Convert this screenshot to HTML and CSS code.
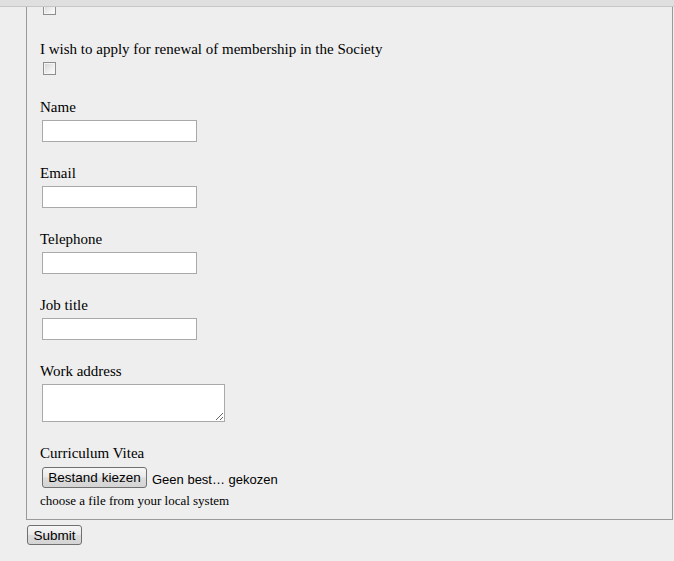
FILE: index.html
```html
<!DOCTYPE html>
<html>
<head>
<meta charset="utf-8">
<link rel="stylesheet" href="styles.css">
</head>
<body>
<div class="topbar"></div>
<form class="page">
  <fieldset class="box">
    <input type="checkbox" class="check first">
    <div class="field renew">
      <label class="lbl">I wish to apply for renewal of membership in the Society</label>
      <input type="checkbox" class="check">
    </div>
    <div class="field name">
      <label class="lbl">Name</label>
      <input type="text" class="txt">
    </div>
    <div class="field">
      <label class="lbl">Email</label>
      <input type="text" class="txt">
    </div>
    <div class="field">
      <label class="lbl">Telephone</label>
      <input type="text" class="txt">
    </div>
    <div class="field">
      <label class="lbl">Job title</label>
      <input type="text" class="txt">
    </div>
    <div class="field">
      <label class="lbl">Work address</label>
      <textarea class="area"></textarea>
    </div>
    <div class="field cv">
      <label class="lbl">Curriculum Vitea</label>
      <div class="file">
        <span class="btn">Bestand kiezen</span>
        <span class="none">Geen best… gekozen</span>
      </div>
      <div class="help">choose a file from your local system</div>
    </div>
  </fieldset>
  <button type="button" class="btn submit">Submit</button>
</form>
</body>
</html>
```
FILE: styles.css
```css
html, body {
  margin: 0;
  padding: 0;
  background: #eeeeee;
}
body {
  font-family: "Liberation Serif", "Times New Roman", serif;
  font-size: 15px;
  color: #000;
}
.topbar {
  position: fixed;
  top: 0;
  left: 0;
  right: 0;
  height: 6px;
  background: #dfdfdf;
  border-bottom: 1px solid #c6c6c6;
  z-index: 5;
}
.page {
  padding: 0 1px 0 26px;
  margin: 0;
}
.box {
  margin: 0;
  border: 1px solid #9a9a9a;
  border-top: none;
  padding: 2px 13px 11px 13px;
  min-width: 0;
}
.check {
  appearance: none;
  -webkit-appearance: none;
  display: block;
  width: 13px;
  height: 13px;
  margin: 0 0 0 3px;
  border: 1px solid #8e8e8e;
  background: linear-gradient(135deg, #d2d2d2 0%, #ebebeb 50%, #ffffff 100%);
  box-shadow: inset 0 0 0 1px #f4f4f4;
  box-sizing: border-box;
}
.field {
  display: flex;
  flex-direction: column;
  align-items: flex-start;
  margin-top: 22px;
}
.renew {
  margin-top: 25px;
}
.name {
  margin-top: 23px;
}
.lbl {
  display: block;
  line-height: 18px;
  height: 18px;
  white-space: nowrap;
}
.renew .check {
  margin-top: 4px;
}
.txt {
  box-sizing: border-box;
  width: 155px;
  height: 22px;
  margin: 4px 0 0 2px;
  border: 1px solid #a9a9a9;
  background: #fff;
  padding: 0 3px;
  outline: none;
}
.area {
  box-sizing: border-box;
  width: 183px;
  height: 38px;
  margin: 4px 0 0 2px;
  border: 1px solid #a9a9a9;
  background: #fff;
  padding: 2px;
  resize: both;
  outline: none;
}
.file {
  display: flex;
  align-items: center;
  margin: 5px 0 0 2px;
  font-family: "Liberation Sans", Arial, sans-serif;
  font-size: 13px;
}
.btn {
  box-sizing: border-box;
  display: inline-flex;
  align-items: center;
  justify-content: center;
  white-space: nowrap;
  font-family: "Liberation Sans", Arial, sans-serif;
  font-size: 13.5px;
  color: #000;
  border: 1px solid #707070;
  border-radius: 3px;
  background: linear-gradient(#f6f6f6 0%, #e9e9e9 48%, #dcdcdc 52%, #d4d4d4 100%);
  padding: 0;
}
.file .btn {
  width: 105px;
  height: 21px;
}
.none {
  margin-left: 5px;
  padding-top: 3px;
}
.help {
  font-size: 13px;
  line-height: 15px;
  margin-top: 5px;
}
.submit {
  margin: 5px 0 0 1px;
  width: 55px;
  height: 20px;
}
```
